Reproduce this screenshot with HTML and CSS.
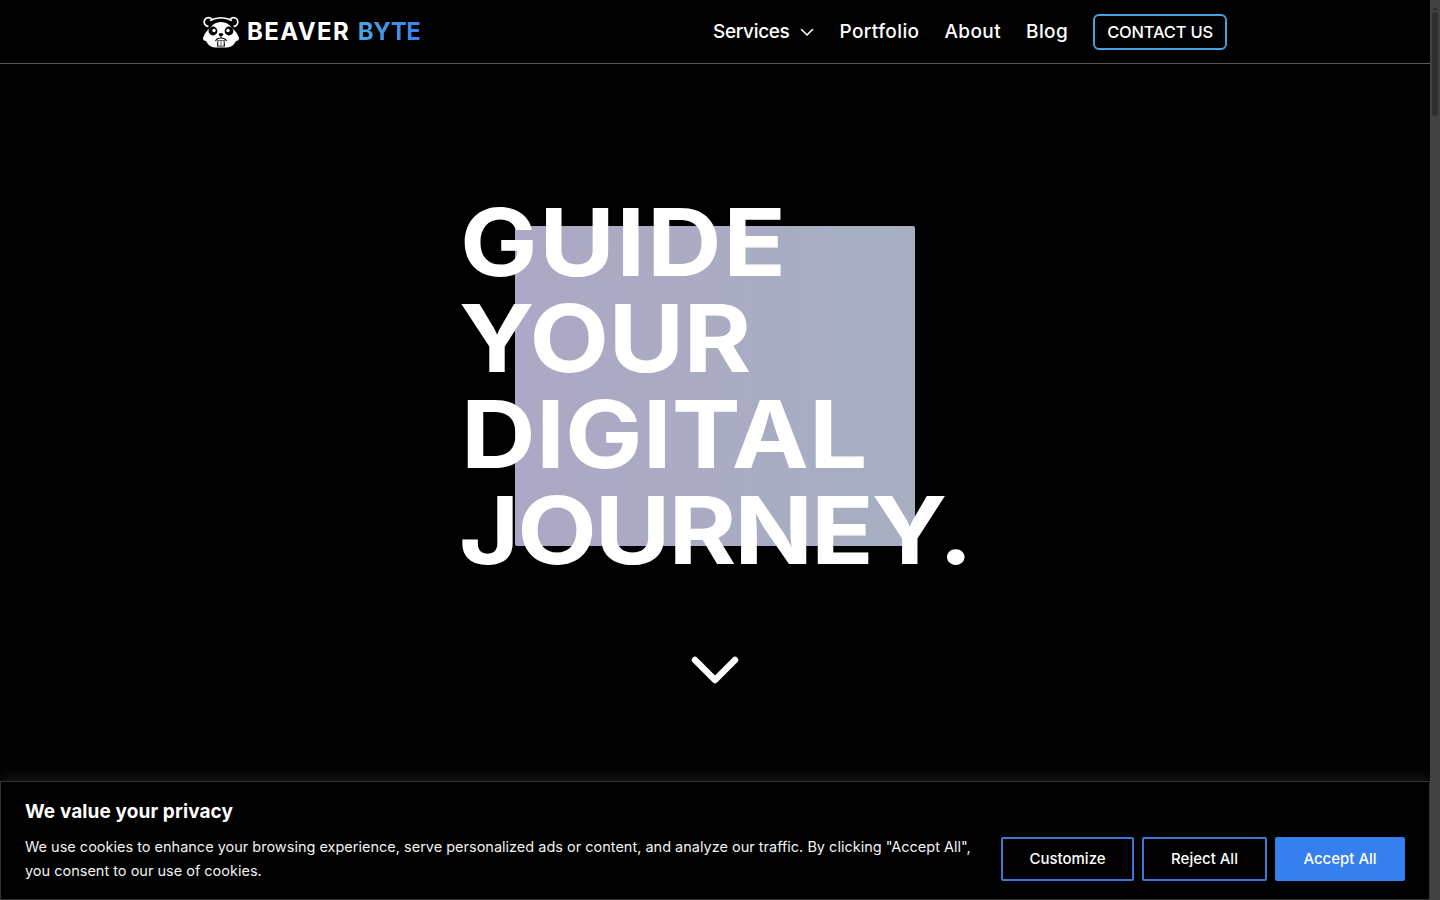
FILE: index.html
```html
<!DOCTYPE html>
<html lang="en">
<head>
<meta charset="utf-8">
<title>Beaver Byte</title>
<link rel="stylesheet" href="styles.css">
</head>
<body>
<div class="app">
  <div class="page">
    <header class="header">
      <div class="header-inner">
        <a class="brand" href="#">
          <svg class="brand-logo" viewBox="0 0 36 32" aria-hidden="true">
            <circle cx="5.500" cy="6" r="4.300" fill="#000" stroke="#fff" stroke-width="1.700"/>
            <circle cx="30.500" cy="6" r="4.300" fill="#000" stroke="#fff" stroke-width="1.700"/>
            <path d="M6 6 Q18 -2 30 6 L31 14 H5Z" fill="#000"/>
            <path d="M7 4.500 Q18 -1 29 4.500" fill="none" stroke="#fff" stroke-width="1.700"/>
            <path d="M7 12 Q11 6 18 6 Q25 6 29 12 Q34 16 36 22 Q36 25 33 25 Q30 31 24 31.500 H12 Q6 31 3 25 Q0 25 0 22 Q2 16 7 12Z" fill="#fff"/>
            <circle cx="10" cy="15" r="4.400" fill="#000"/>
            <circle cx="26" cy="15" r="4.400" fill="#000"/>
            <circle cx="11" cy="14.500" r="1.700" fill="#fff"/>
            <circle cx="25" cy="14.500" r="1.700" fill="#fff"/>
            <ellipse cx="18" cy="18.500" rx="2.400" ry="1.500" fill="#000"/>
            <path d="M18 19 V22 M18 22 Q14 22 12.500 25 M18 22 Q22 22 23.500 25" fill="none" stroke="#000" stroke-width="1.200"/>
            <path d="M14.500 24 H21.500 L22 30.500 H14Z" fill="#000"/>
            <rect x="15.300" y="24.500" width="2.400" height="5.300" fill="#fff"/>
            <rect x="18.300" y="24.500" width="2.400" height="5.300" fill="#fff"/>
          </svg>
          <span class="brand-name"><span class="brand-first">BEAVER</span> <span class="brand-accent">BYTE</span></span>
        </a>
        <nav class="nav">
          <a class="nav-link nav-services" href="#"><span class="nav-services-label">Services</span>
            <svg class="nav-caret" viewBox="0 0 14 9" aria-hidden="true"><path d="M1.500 1.500 7 7l5.500-5.500" fill="none" stroke="#fff" stroke-width="1.600" stroke-linecap="round" stroke-linejoin="round"/></svg>
          </a>
          <a class="nav-link" href="#">Portfolio</a>
          <a class="nav-link" href="#">About</a>
          <a class="nav-link" href="#">Blog</a>
          <a class="contact" href="#">CONTACT US</a>
        </nav>
      </div>
    </header>
    <main class="hero">
      <div class="hero-stage">
        <div class="hero-square"></div>
        <h1 class="hero-title"><span class="l1">GUIDE</span><span class="l2">YOUR</span><span class="l3">DIGITAL</span><span class="l4">JOURNEY.</span></h1>
      </div>
      <svg class="hero-chevron" viewBox="0 0 50 30" aria-hidden="true"><path d="M5 4 25 24 45 4" fill="none" stroke="#fff" stroke-width="6.500" stroke-linecap="round" stroke-linejoin="round"/></svg>
    </main>
    <section class="cookie">
      <div class="cookie-copy">
        <h2 class="cookie-title">We value your privacy</h2>
        <p class="cookie-text">We use cookies to enhance your browsing experience, serve personalized ads or content, and analyze our traffic. By clicking "Accept All", you consent to our use of cookies.</p>
      </div>
      <div class="cookie-actions">
        <button class="btn btn-customize">Customize</button>
        <button class="btn btn-reject">Reject All</button>
        <button class="btn btn-accept">Accept All</button>
      </div>
    </section>
  </div>
  <div class="scrollbar" aria-hidden="true">
    <div class="scroll-arrow"></div>
    <div class="scroll-thumb"></div>
  </div>
</div>
</body>
</html>
```
FILE: styles.css
```css
* { box-sizing: border-box; }
html, body { margin: 0; height: 100%; background: #000; overflow: hidden; }
body { font-family: Inter, "Noto Sans", sans-serif; color: #fff; }
a { color: inherit; text-decoration: none; }
.app { display: flex; width: 1440px; height: 900px; }
.page { position: relative; flex: 1; min-width: 0; overflow: hidden; }

.header { height: 64px; border-bottom: 1px solid #5a5a5a; }
.header-inner { width: 1024px; height: 63px; margin: 0 auto; display: flex; align-items: center; justify-content: space-between; }
.brand { display: flex; align-items: center; gap: 8px; }
.brand-logo { width: 36px; height: 32px; }
.brand-name { font-size: 24px; font-weight: 700; }
.brand-first { letter-spacing: 1.400px; }
.brand-accent { letter-spacing: -0.400px; margin-left: 2px; background: linear-gradient(90deg, #4aa6e0, #3b82f0); -webkit-background-clip: text; background-clip: text; color: transparent; }
.nav { display: flex; align-items: center; gap: 25px; }
.nav-link { display: flex; align-items: center; font-size: 19px; font-weight: 500; letter-spacing: 0.400px; }
.nav-services { gap: 11px; }
.nav-services-label { letter-spacing: -0.350px; }
.nav-caret { width: 14px; height: 9px; margin-top: 2px; }
.contact { padding: 6px 12px; border: 2px solid #4a9fe0; border-radius: 6px; font-size: 16.500px; letter-spacing: -0.200px; font-weight: 500; line-height: 20px; }

.hero { position: relative; height: 836px; }
.hero-stage { position: relative; width: 400px; height: 320px; margin: 162px auto 0; }
.hero-square { width: 400px; height: 320px; border-radius: 2px; background: linear-gradient(90deg, #ada8c5, #a6afc2); }
.hero-title { position: absolute; left: -55px; top: -32px; margin: 0; font-size: 94px; line-height: 96px; font-weight: 700; white-space: nowrap; transform: scaleX(1.1); transform-origin: left top; }
.hero-title span { display: block; }
.hero-title .l1 { letter-spacing: 1.400px; }
.hero-title .l2 { letter-spacing: -0.600px; margin-left: -1px; }
.hero-title .l3 { letter-spacing: 0.100px; margin-left: 1px; }
.hero-title .l4 { letter-spacing: -1.900px; margin-left: -1px; }
.hero-chevron { display: block; width: 50px; height: 30px; margin: 110px auto 0; }

.cookie { position: absolute; left: 0; right: 0; bottom: 0; height: 119px; display: flex; align-items: flex-end; justify-content: space-between; padding: 0 24px 18px 24px; background: #000; border: 1px solid #333; box-shadow: 0 -4px 14px rgba(255,255,255,.1); }
.cookie-copy { width: 960px; margin-bottom: -2px; }
.cookie-title { margin: 0 0 11px; font-size: 19px; letter-spacing: 0.100px; line-height: 24px; font-weight: 700; }
.cookie-text { margin: 0; font-size: 14.500px; line-height: 24px; color: #f2f2f2; }
.cookie-actions { display: flex; gap: 8px; }
.btn { height: 44px; padding-bottom: 3px; border-radius: 2px; border: 2px solid #3b78d8; background: #000; color: #fff; font: 500 15px Inter, sans-serif; }
.btn-customize { width: 133px; }
.btn-reject { width: 125px; }
.btn-accept { width: 130px; border-color: #3580ee; background: #3580ee; }

.scrollbar { width: 10px; background: #424242; display: flex; flex-direction: column; align-items: center; }
.scroll-arrow { width: 0; height: 0; margin-top: 4px; border: 3px solid transparent; border-bottom-color: #2a2a2a; }
.scroll-thumb { width: 6px; height: 104px; margin-top: 2px; border-radius: 3px; background: #2e2e2e; }
```
